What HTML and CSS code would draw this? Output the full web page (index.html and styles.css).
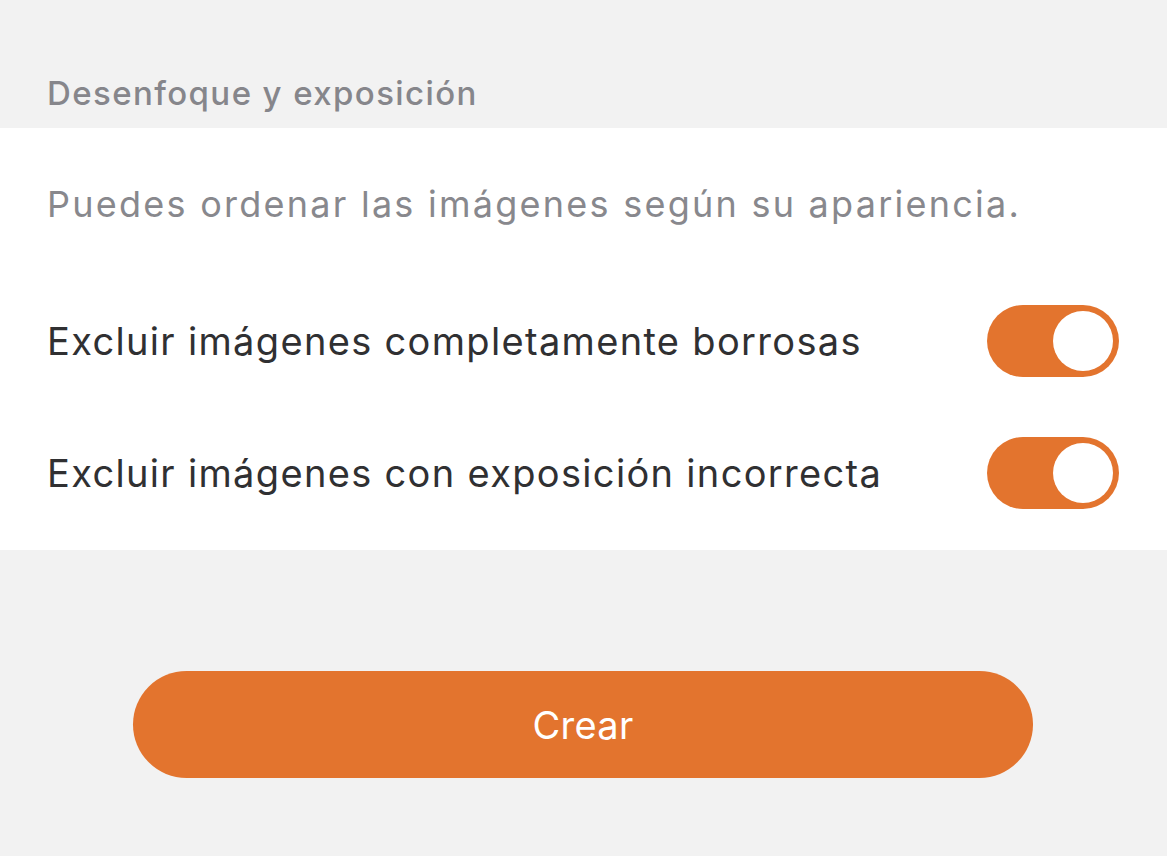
FILE: index.html
```html
<!DOCTYPE html>
<html lang="es">
<head>
<meta charset="utf-8">
<link rel="stylesheet" href="styles.css">
</head>
<body>
<div class="page">
  <div class="section-header">Desenfoque y exposición</div>
  <div class="card">
    <p class="desc">Puedes ordenar las imágenes según su apariencia.</p>
    <div class="row">
      <span class="label">Excluir imágenes completamente borrosas</span>
      <span class="toggle"><span class="knob"></span></span>
    </div>
    <div class="row">
      <span class="label">Excluir imágenes con exposición incorrecta</span>
      <span class="toggle"><span class="knob"></span></span>
    </div>
  </div>
  <div class="actions">
    <button class="btn">Crear</button>
  </div>
</div>
</body>
</html>
```
FILE: styles.css
```css
html, body {
  margin: 0;
  padding: 0;
  background: #f2f2f2;
}
body {
  font-family: "Inter", "Noto Sans", sans-serif;
  width: 1167px;
  height: 856px;
  overflow: hidden;
}
.page {
  display: flex;
  flex-direction: column;
}
.section-header {
  height: 128px;
  box-sizing: border-box;
  padding: 73px 0 0 47px;
  font-size: 33px;
  line-height: 40px;
  font-weight: 500;
  letter-spacing: 1.4px;
  color: #86868b;
}
.card {
  background: #ffffff;
  height: 422px;
  box-sizing: border-box;
  padding: 54px 48px 11px 47px;
  display: flex;
  flex-direction: column;
}
.desc {
  margin: 0 0 49px 0;
  font-size: 36px;
  line-height: 44px;
  letter-spacing: 2.25px;
  color: #88888d;
}
.row {
  height: 132px;
  display: flex;
  align-items: center;
  justify-content: space-between;
}
.label {
  font-size: 38px;
  line-height: 132px;
  letter-spacing: 1.33px;
  color: #303032;
}
.toggle {
  position: relative;
  width: 132px;
  height: 72px;
  border-radius: 36px;
  background: #e3742e;
  flex: none;
}
.knob {
  position: absolute;
  right: 6px;
  top: 6px;
  width: 60px;
  height: 60px;
  border-radius: 50%;
  background: #ffffff;
}
.actions {
  display: flex;
  justify-content: center;
  padding-top: 121px;
}
.btn {
  width: 900px;
  height: 107px;
  border: none;
  border-radius: 54px;
  background: #e3742e;
  color: #ffffff;
  font-family: "Inter", "Noto Sans", sans-serif;
  font-size: 38px;
  font-weight: 400;
  letter-spacing: 0.3px;
  margin-left: -1px;
}
```
